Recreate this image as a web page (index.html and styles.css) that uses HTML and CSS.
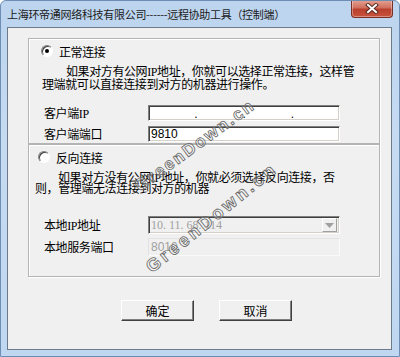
FILE: index.html
```html
<!DOCTYPE html>
<html lang="zh-CN">
<head>
  <meta charset="UTF-8" />
  <title>远程协助工具</title>
  <link rel="stylesheet" href="styles.css">
</head>
<body>

  <!-- WINDOW -->
  <div class="window">
    <div class="titlebar">
      <span class="title">上海环帝通网络科技有限公司------远程协助工具（控制端）</span>
      <button class="close-btn" type="button">
        <svg width="14" height="11" viewBox="0 0 14 11">
          <path d="M3 2 L11 9 M11 2 L3 9" stroke="#5a2a22" stroke-width="4" stroke-linecap="square"/>
          <path d="M3 2 L11 9 M11 2 L3 9" stroke="#fff" stroke-width="2" stroke-linecap="square"/>
        </svg>
      </button>
    </div>

    <div class="client">
      <!-- normal connect -->
      <div class="group group-normal">
        <label class="radio-row">
          <span class="radio checked"></span>
          <span>正常连接</span>
        </label>
        <p class="hint">如果对方有公网IP地址，你就可以选择正常连接，这样管<br>理端就可以直接连接到对方的机器进行操作。</p>
        <div class="field-row first">
          <span class="field-label">客户端IP</span>
          <div class="input ip-input">
            <span class="ip-seg"></span><span class="ip-dot">.</span>
            <span class="ip-seg"></span><span class="ip-dot">.</span>
            <span class="ip-seg"></span><span class="ip-dot">.</span>
            <span class="ip-seg"></span>
          </div>
        </div>
        <div class="field-row">
          <span class="field-label">客户端端口</span>
          <div class="input">9810</div>
        </div>
      </div>

      <!-- reverse connect -->
      <div class="group group-reverse">
        <label class="radio-row">
          <span class="radio"></span>
          <span>反向连接</span>
        </label>
        <p class="hint">如果对方没有公网IP地址，你就必须选择反向连接，否<br>则，管理端无法连接到对方的机器</p>
        <div class="field-row first">
          <span class="field-label">本地IP地址</span>
          <div class="input combo disabled">
            <span class="combo-text">10. 11. 68. 114</span>
            <span class="combo-btn">
              <svg width="9" height="5" viewBox="0 0 9 5"><path d="M0 0 H9 L4.5 5 Z" fill="#a0a0a0"/></svg>
            </span>
          </div>
        </div>
        <div class="field-row">
          <span class="field-label">本地服务端口</span>
          <div class="input flat disabled">8010</div>
        </div>
      </div>

      <div class="buttons">
        <button class="btn" type="button">确定</button>
        <button class="btn" type="button">取消</button>
      </div>
    </div>

    <!-- watermark overlay -->
    <div class="watermark wm-one">GreenDown.cn</div>
    <div class="watermark wm-two">GreenDown.cn</div>
  </div>

</body>
</html>
```

FILE: styles.css
```css
html, body {
  margin: 0;
  padding: 0;
  background: #fff;
}

body {
  font-family: "Liberation Serif", "Noto Sans CJK SC", serif;
  font-size: 12px;
  color: #000;
}

/* WINDOW FRAME */
.window {
  position: relative;
  width: 400px;
  height: 357px;
  box-sizing: border-box;
  padding: 0 7px 6px 6px;
  display: flex;
  flex-direction: column;
  background: linear-gradient(#bcd4ee, #c6dbf2 40%, #bfd7f0);
  border: 1px solid #6e8db3;
  border-radius: 6px 6px 0 0;
  overflow: hidden;
}

.titlebar {
  height: 26px;
  display: flex;
  align-items: flex-start;
  justify-content: space-between;
}

.title {
  margin-top: 5px;
  font-family: "Noto Sans CJK SC", sans-serif;
  font-size: 11px;
  letter-spacing: -0.3px;
  color: #1b1b1b;
  white-space: nowrap;
}

.close-btn {
  width: 42px;
  height: 18px;
  margin: -1px -1px 0 0;
  padding: 0;
  display: flex;
  justify-content: center;
  align-items: center;
  border: 1px solid #7b3026;
  border-top: none;
  border-radius: 0 0 4px 4px;
  background: linear-gradient(#e4a394, #d0705e 45%, #b8402c 55%, #c9533d);
  box-shadow: inset 0 0 0 1px rgba(255, 255, 255, 0.35);
}

/* CLIENT AREA */
.client {
  flex: 1;
  background: #f0f0f0;
  border: 1px solid #6c7a8a;
  padding: 10px 11px 0 20px;
}

.group {
  box-sizing: border-box;
  border: 1px solid #b4b4b4;
  box-shadow: inset 1px 1px #fff, 1px 1px #fff;
  letter-spacing: -0.4px;
}

.group-normal { height: 106px; }
.group-reverse { height: 133px; }

.radio-row {
  height: 14px;
  margin-top: 5px;
  display: flex;
  align-items: center;
  gap: 6px;
  font-family: "Noto Sans CJK SC", sans-serif;
}

.group-normal .radio-row { padding-left: 12px; }
.group-reverse .radio-row { padding-left: 9px; }

.radio {
  width: 12px;
  height: 12px;
  box-sizing: border-box;
  border-radius: 50%;
  border: 1px solid;
  border-color: #808080 #fff #fff #808080;
  box-shadow: inset 1px 1px #404040;
  background: #fff;
  display: flex;
  justify-content: center;
  align-items: center;
}

.radio.checked::after {
  content: "";
  width: 4px;
  height: 4px;
  border-radius: 50%;
  background: #000;
}

.hint {
  margin: 0;
  white-space: nowrap;
}

.group-normal .hint {
  margin-top: 8px;
  padding-left: 13px;
  text-indent: 24px;
  line-height: 12.5px;
}

.group-reverse .hint {
  margin-top: 9px;
  padding-left: 6px;
  text-indent: 23px;
  line-height: 11px;
}

.field-row {
  display: flex;
  align-items: center;
  margin-top: 3px;
  padding-left: 15px;
}

.group-normal .field-row.first { margin-top: 13px; }
.group-reverse .field-row.first { margin-top: 21px; }
.group-reverse .field-row { margin-top: 4px; }

.field-label {
  width: 104px;
}

/* sunken edit boxes */
.input {
  width: 192px;
  height: 16px;
  box-sizing: border-box;
  border: 1px solid;
  border-color: #808080 #fff #fff #808080;
  box-shadow: inset 1px 1px #404040, inset -1px -1px #d4d0c8;
  background: #fff;
  padding: 0 0 0 2px;
  font-family: "Liberation Sans", sans-serif;
  font-size: 12px;
  letter-spacing: 0;
  line-height: 14px;
  display: flex;
  align-items: center;
}

.ip-input { padding: 0; }
.ip-seg { flex: 1; }
.ip-dot {
  width: 3px;
  align-self: flex-end;
  line-height: 11px;
  color: #000;
}

.combo {
  height: 18px;
  justify-content: space-between;
  padding-right: 2px;
}

.input.disabled {
  background: #f0f0f0;
  color: #a0a0a0;
}

.combo-text {
  font-family: "Liberation Serif", serif;
  font-size: 12px;
}

.combo-btn {
  width: 15px;
  height: 14px;
  box-sizing: border-box;
  border: 1px solid;
  border-color: #fff #a0a0a0 #a0a0a0 #fff;
  background: #f0f0f0;
  display: flex;
  justify-content: center;
  align-items: center;
}

.input.flat {
  height: 18px;
  border-color: #e2e2e2 #fafafa #fafafa #e2e2e2;
  box-shadow: none;
}

/* BUTTONS */
.buttons {
  display: flex;
  gap: 25px;
  margin-top: 23px;
  padding-left: 93px;
}

.btn {
  width: 73px;
  height: 21px;
  padding: 0;
  box-sizing: border-box;
  border: 1px solid;
  border-color: #fff #404040 #404040 #fff;
  box-shadow: inset -1px -1px #808080;
  background: #f0f0f0;
  font-family: "Noto Sans CJK SC", sans-serif;
  font-size: 12px;
  color: #000;
  line-height: 17px;
}

/* WATERMARK */
.watermark {
  position: absolute;
  transform: translate(-50%, -50%) rotate(-36deg);
  font-family: "Liberation Sans", sans-serif;
  font-weight: bold;
  color: rgba(255, 255, 255, 0.3);
  -webkit-text-stroke: 0.8px #666;
  white-space: nowrap;
  pointer-events: none;
}

.wm-one {
  left: 194px;
  top: 145px;
  font-size: 17px;
  letter-spacing: 2px;
}

.wm-two {
  left: 211px;
  top: 217px;
  font-size: 18px;
  letter-spacing: 3px;
  transform: translate(-50%, -50%) rotate(-39deg);
}
```
